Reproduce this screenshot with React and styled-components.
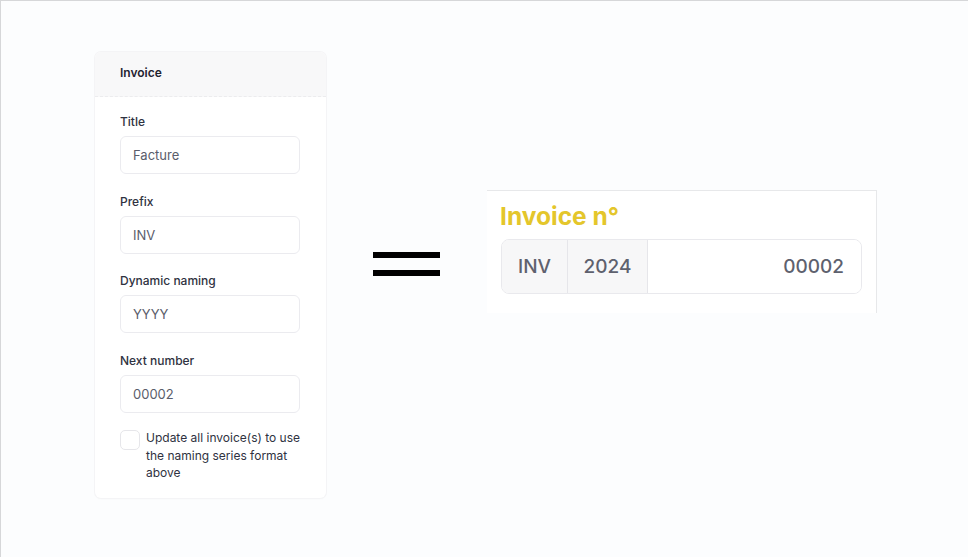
import React from 'react';
import styled, { createGlobalStyle } from 'styled-components';

const GlobalStyle = createGlobalStyle`
  * { box-sizing: border-box; }
  html, body { margin: 0; padding: 0; }
  body {
    font-family: Inter, "Noto Sans", Arial, sans-serif;
    background: #fcfdfe;
  }
`;

const Page = styled.div`
  display: flex;
  align-items: flex-start;
  width: 968px;
  height: 557px;
  padding-left: 94px;
  border-top: 1px solid #d6d7d9;
  border-left: 1px solid #d6d7d9;
  background: #fcfdfe;
  overflow: hidden;
`;

const Card = styled.div`
  width: 231px;
  margin-top: 51px;
  background: #ffffff;
  border-radius: 6px;
  box-shadow: 0 0 0 1px #f4f4f6, 0 1px 2px rgba(0, 0, 0, 0.03);
  overflow: hidden;
`;

const CardHeader = styled.div`
  display: flex;
  align-items: center;
  height: 45px;
  padding: 0 25px 4px;
  background: #f8f8f9;
  border-bottom: 1px dashed #ececee;
  font-size: 12px;
  font-weight: 600;
  color: #1f2230;
`;

const CardBody = styled.div`
  display: flex;
  flex-direction: column;
  gap: 19.5px;
  padding: 17px 25px 16px;
`;

const Field = styled.div`
  display: flex;
  flex-direction: column;
  gap: 6px;
`;

const Label = styled.label`
  font-size: 12px;
  line-height: 16px;
  font-weight: 500;
  color: #2f3241;
`;

const Input = styled.div`
  display: flex;
  align-items: center;
  width: 180px;
  height: 38px;
  padding: 0 12px;
  border: 1px solid #ebebef;
  border-radius: 6px;
  background: #fff;
  font-size: 13px;
  color: #5a5d6b;
`;

const CheckRow = styled.div`
  display: flex;
  align-items: flex-start;
  gap: 6px;
  margin-top: -3px;
`;

const Box = styled.span`
  flex: none;
  width: 20px;
  height: 20px;
  margin-top: 1px;
  border: 1px solid #e6e6ea;
  border-radius: 5px;
  background: #fff;
`;

const CheckText = styled.span`
  font-size: 12px;
  line-height: 17.5px;
  color: #2f3241;
  width: 155px;
`;

const Equals = styled.div`
  display: flex;
  flex-direction: column;
  gap: 12px;
  width: 67px;
  margin: 251px 0 0 47px;
`;

const Bar = styled.span`
  display: block;
  height: 6px;
  background: #000;
`;

const Panel = styled.div`
  display: flex;
  flex-direction: column;
  gap: 8px;
  width: 390px;
  height: 123px;
  margin: 189px 0 0 47px;
  padding: 11px 14px 0 14px;
  border-top: 1px solid #e7e8ea;
  border-right: 1px solid #e7e8ea;
  background: #fff;
`;

const Title = styled.div`
  font-size: 24.5px;
  line-height: 29px;
  font-weight: 700;
  color: #e4c62b;
  margin-left: -1px;
`;

const Group = styled.div`
  display: flex;
  height: 55px;
  border: 1px solid #e9e9ed;
  border-radius: 8px;
  overflow: hidden;
`;

const Segment = styled.div`
  display: flex;
  align-items: center;
  justify-content: ${(p) => (p.$grow ? 'flex-end' : 'center')};
  flex: ${(p) => (p.$grow ? '1' : 'none')};
  width: ${(p) => (p.$w ? `${p.$w}px` : 'auto')};
  padding: ${(p) => (p.$grow ? '0 17px' : '0')};
  background: ${(p) => (p.$grow ? '#fff' : '#f7f7f8')};
  border-right: ${(p) => (p.$grow ? 'none' : '1px solid #e6e6ea')};
  font-size: 19px;
  font-weight: 500;
  color: #5e616e;
`;

const fields = [
  { label: 'Title', value: 'Facture' },
  { label: 'Prefix', value: 'INV' },
  { label: 'Dynamic naming', value: 'YYYY' },
  { label: 'Next number', value: '00002' },
];

export default function App() {
  return (
    <>
      <GlobalStyle />
      <Page>
        <Card>
          <CardHeader>Invoice</CardHeader>
          <CardBody>
            {fields.map((f) => (
              <Field key={f.label}>
                <Label>{f.label}</Label>
                <Input>{f.value}</Input>
              </Field>
            ))}
            <CheckRow>
              <Box />
              <CheckText>
                Update all invoice(s) to use the naming series format above
              </CheckText>
            </CheckRow>
          </CardBody>
        </Card>
        <Equals>
          <Bar />
          <Bar />
        </Equals>
        <Panel>
          <Title>Invoice n°</Title>
          <Group>
            <Segment $w={66}>INV</Segment>
            <Segment $w={80}>2024</Segment>
            <Segment $grow>00002</Segment>
          </Group>
        </Panel>
      </Page>
    </>
  );
}
